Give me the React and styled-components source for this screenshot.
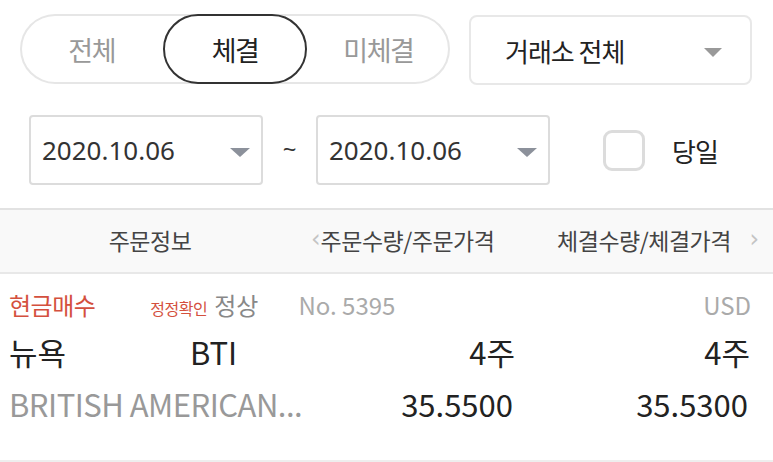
import React from "react";
import styled, { createGlobalStyle } from "styled-components";

const GlobalStyle = createGlobalStyle`
	body {
		margin: 0;
		background: #fff;
		font-family: "Noto Sans CJK KR", "Noto Sans", sans-serif;
		color: #222;
	}
`;

const tabs = ["전체", "체결", "미체결"];

const App = () => {
	return (
		<Page>
			<GlobalStyle />
			<FilterRow>
				<Segment>
					{tabs.map((t) => (
						<Tab key={t} active={t === "체결"}>
							{t}
						</Tab>
					))}
				</Segment>
				<Select>
					<span>거래소 전체</span>
					<Caret />
				</Select>
			</FilterRow>

			<DateRow>
				<DateBox>
					<span>2020.10.06</span>
					<Caret blue />
				</DateBox>
				<Tilde>~</Tilde>
				<DateBox>
					<span>2020.10.06</span>
					<Caret blue />
				</DateBox>
				<CheckLabel>
					<CheckBox />
					<span>당일</span>
				</CheckLabel>
			</DateRow>

			<TableHead>
				<HeadCell>주문정보</HeadCell>
				<HeadCell>주문수량/주문가격</HeadCell>
				<HeadCell>체결수량/체결가격</HeadCell>
				<Chevron left>‹</Chevron>
				<Chevron>›</Chevron>
			</TableHead>

			<OrderRow>
				<MetaLine>
					<TypeText>현금매수</TypeText>
					<SmallRed>정정확인</SmallRed>
					<GrayText>정상</GrayText>
					<GrayText light>No. 5395</GrayText>
					<Currency>USD</Currency>
				</MetaLine>
				<Grid>
					<Cell>뉴욕</Cell>
					<Cell>BTI</Cell>
					<Cell right>4주</Cell>
					<Cell right>4주</Cell>
				</Grid>
				<Grid>
					<Cell span={2} muted>
						BRITISH AMERICAN...
					</Cell>
					<Cell right num>
						35.5500
					</Cell>
					<Cell right num>
						35.5300
					</Cell>
				</Grid>
			</OrderRow>
		</Page>
	);
};

export default App;

const Page = styled.div`
	width: 773px;
	height: 462px;
	overflow: hidden;
`;

const FilterRow = styled.div`
	display: flex;
	gap: 19px;
	padding: 14px 21px 0 20px;
`;

const Segment = styled.div`
	display: grid;
	grid-template-columns: repeat(3, 1fr);
	width: 430px;
	height: 70px;
	border-radius: 35px;
	box-shadow: inset 0 0 0 2px #e6e6e6;
`;

const Tab = styled.div`
	display: flex;
	align-items: center;
	justify-content: center;
	box-sizing: border-box;
	border-radius: 35px;
	border: 2px solid ${(p) => (p.active ? "#333" : "transparent")};
	color: ${(p) => (p.active ? "#222" : "#999")};
	font-size: 27px;
	letter-spacing: -1.5px;
`;

const Select = styled.div`
	flex: 1;
	display: flex;
	align-items: center;
	justify-content: space-between;
	box-sizing: border-box;
	height: 70px;
	margin-top: 1px;
	padding: 0 28px 0 34px;
	border: 2px solid #e8e8e8;
	border-radius: 8px;
	font-size: 26px;
	letter-spacing: -1px;
	color: #222;
`;

const Caret = styled.span`
	width: 0;
	height: 0;
	border-left: ${(p) => (p.blue ? 10 : 9)}px solid transparent;
	border-right: ${(p) => (p.blue ? 10 : 9)}px solid transparent;
	border-top: 9px solid ${(p) => (p.blue ? "#8c919b" : "#999")};
	margin-top: 4px;
`;

const DateRow = styled.div`
	display: flex;
	align-items: center;
	padding: 30px 0 0 29px;
`;

const DateBox = styled.div`
	display: flex;
	align-items: center;
	justify-content: space-between;
	box-sizing: border-box;
	width: 234px;
	height: 70px;
	padding: 0 11px 0 11px;
	border: 2px solid #dcdcdc;
	border-radius: 4px;
	font-family: "Noto Sans", sans-serif;
	font-size: 26px;
	color: #333;
`;

const Tilde = styled.span`
	width: 53px;
	text-align: center;
	font-family: "Noto Sans", sans-serif;
	font-size: 24px;
	color: #333;
	margin-top: -4px;
`;

const CheckLabel = styled.label`
	display: flex;
	align-items: center;
	gap: 27px;
	margin-left: 53px;
	font-size: 26px;
	letter-spacing: -1px;
	color: #222;
`;

const CheckBox = styled.span`
	box-sizing: border-box;
	width: 42px;
	height: 41px;
	border: 3px solid #dcdcdc;
	border-radius: 9px;
`;

const TableHead = styled.div`
	position: relative;
	display: grid;
	grid-template-columns: 300px 215px 1fr;
	align-items: center;
	box-sizing: border-box;
	height: 66px;
	margin-top: 23px;
	background: #f9f9f9;
	border-top: 2px solid #e2e2e2;
	border-bottom: 2px solid #e8e8e8;
`;

const HeadCell = styled.div`
	text-align: center;
	font-size: 23px;
	letter-spacing: -0.5px;
	color: #444;
	margin-top: -2px;
`;

const Chevron = styled.span`
	position: absolute;
	top: 50%;
	transform: translateY(-56%);
	${(p) => (p.left ? "left: 311px;" : "right: 14px;")}
	font-family: "DejaVu Sans", sans-serif;
	font-size: 24px;
	color: #c4c4c4;
`;

const OrderRow = styled.div`
	box-sizing: border-box;
	height: 188px;
	padding: 13px 22px 0 9px;
	border-bottom: 2px solid #eee;
`;

const MetaLine = styled.div`
	display: flex;
	align-items: baseline;
	height: 38px;
`;

const TypeText = styled.span`
	font-size: 24px;
	color: #d4503e;
	letter-spacing: -0.5px;
	margin-right: 55px;
`;

const SmallRed = styled.span`
	font-size: 16px;
	color: #d4503e;
	letter-spacing: -0.5px;
	margin-right: 7px;
`;

const GrayText = styled.span`
	font-size: 24px;
	color: ${(p) => (p.light ? "#aaa" : "#888")};
	margin-right: ${(p) => (p.light ? 0 : 40)}px;
`;

const Currency = styled.span`
	margin-left: auto;
	font-size: 24px;
	color: #aaa;
`;

const Grid = styled.div`
	display: grid;
	grid-template-columns: 181px 175px 150px 235px;
	align-items: center;
	height: 52px;
`;

const Cell = styled.div`
	${(p) => (p.span ? `grid-column: span ${p.span};` : "")}
	text-align: ${(p) => (p.right ? "right" : "left")};
	padding-right: ${(p) => (p.num ? 2 : 0)}px;
	font-size: 31px;
	letter-spacing: ${(p) => (p.muted ? -0.5 : 0)}px;
	color: ${(p) => (p.muted ? "#999" : "#222")};
	white-space: nowrap;
`;
